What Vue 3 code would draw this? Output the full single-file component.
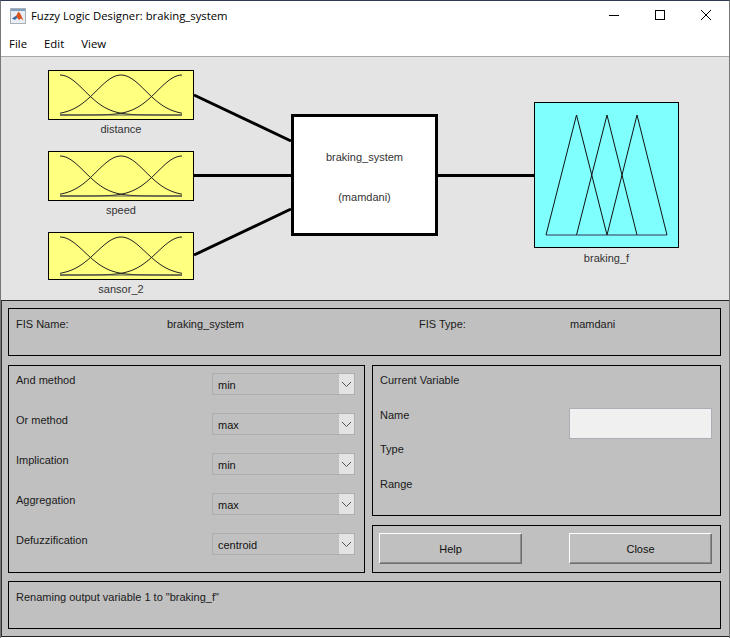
<template>
  <div class="window">
    <header class="titlebar">
      <svg class="app-icon" width="16" height="16" viewBox="0 0 16 16">
        <rect x="0.5" y="0.5" width="15" height="15" fill="#e8eef4" stroke="#a9b0b8" />
        <rect x="1" y="1" width="14" height="2" fill="#7f9fc0" />
        <path d="M2 10.5 L6 8 L8.5 3.5 L10.5 6 L13.5 12.5 L11 10.5 L9 12 L7 9.5 Z" fill="#d9541e" />
        <path d="M2 10.5 L6 8 L7.5 9.5 L5 12 Z" fill="#2f6fb0" />
      </svg>
      <span class="title">Fuzzy Logic Designer: braking_system</span>
      <div class="controls">
        <svg width="12" height="12" viewBox="0 0 12 12"><path d="M1 6.5 H11" stroke="#000" /></svg>
        <svg width="12" height="12" viewBox="0 0 12 12"><rect x="1.5" y="1.5" width="9" height="9" fill="none" stroke="#000" /></svg>
        <svg width="12" height="12" viewBox="0 0 12 12"><path d="M1 1 L11 11 M11 1 L1 11" stroke="#000" /></svg>
      </div>
    </header>

    <nav class="menubar">
      <span v-for="item in menus" :key="item">{{ item }}</span>
    </nav>

    <section class="diagram">
      <svg class="wires" width="730" height="243" viewBox="0 57 730 243">
        <path d="M194 95 L291 141 M194 175.5 H291 M194 255 L291 209 M437 175.5 H534" stroke="#000" stroke-width="3" fill="none" />
      </svg>

      <div v-for="input in inputs" :key="input.name" class="node input-node" :style="{ top: input.top + 'px' }">
        <svg :width="146" :height="input.height" :viewBox="`0 0 146 ${input.height}`">
          <rect x="0.5" y="0.5" width="145" :height="input.height - 1" fill="#ffff80" stroke="#000" />
          <path v-for="d in gaussians(input.height)" :key="d" :d="d" fill="none" stroke="#222" />
          <path :d="`M12 ${input.height - 5} H134`" stroke="#555" />
        </svg>
        <div class="node-label">{{ input.name }}</div>
      </div>

      <div class="node system-node">
        <span>braking_system</span>
        <span>(mamdani)</span>
      </div>

      <div class="node output-node">
        <svg width="145" height="146" viewBox="0 0 145 146">
          <rect x="0.5" y="0.5" width="144" height="145" fill="#80ffff" stroke="#000" />
          <path d="M12 133 L42.5 13 L73 133 M42.5 133 L73 13 L103 133 M73 133 L103 13 L133 133" fill="none" stroke="#111" />
          <path d="M12 133 H133" stroke="#335" />
        </svg>
        <div class="node-label">braking_f</div>
      </div>
    </section>

    <section class="panel">
      <div class="frame fis-frame">
        <span>FIS Name:</span>
        <span>braking_system</span>
        <span>FIS Type:</span>
        <span>mamdani</span>
      </div>

      <div class="middle">
        <div class="frame methods">
          <div v-for="m in methods" :key="m.label" class="method-row">
            <span class="method-label">{{ m.label }}</span>
            <div class="select">
              <span class="select-value">{{ m.value }}</span>
              <span class="select-arrow">
                <svg width="11" height="7" viewBox="0 0 11 7"><path d="M1 1 L5.5 5.5 L10 1" fill="none" stroke="#555" /></svg>
              </span>
            </div>
          </div>
        </div>

        <div class="right-col">
          <div class="frame current">
            <div class="current-labels">
              <span>Current Variable</span>
              <span>Name</span>
              <span>Type</span>
              <span>Range</span>
            </div>
            <div class="name-input"></div>
          </div>
          <div class="frame buttons">
            <button>Help</button>
            <button>Close</button>
          </div>
        </div>
      </div>

      <div class="frame status">Renaming output variable 1 to "braking_f"</div>
    </section>
  </div>
</template>

<script setup>
const menus = ['File', 'Edit', 'View']

const inputs = [
  { name: 'distance', top: 13, height: 50 },
  { name: 'speed', top: 94, height: 50 },
  { name: 'sansor_2', top: 175, height: 48 }
]

const methods = [
  { label: 'And method', value: 'min' },
  { label: 'Or method', value: 'max' },
  { label: 'Implication', value: 'min' },
  { label: 'Aggregation', value: 'max' },
  { label: 'Defuzzification', value: 'centroid' }
]

// three gaussian membership curves across the small box
const gaussians = (h) => {
  const top = 5
  const bottom = h - 5
  return [12, 73, 134].map((center) => {
    let d = ''
    for (let x = 12; x <= 134; x += 2) {
      const v = Math.exp(-((x - center) ** 2) / (2 * 24.5 * 24.5))
      const y = bottom - (bottom - top) * v
      d += (d ? ' L' : 'M') + x + ' ' + y.toFixed(2)
    }
    return d
  })
}
</script>

<style scoped>
.window {
  width: 730px;
  height: 638px;
  box-sizing: border-box;
  background: #fff;
  border-top: 1px solid #2b3a52;
  border-left: 1px solid #777;
  border-right: 1px solid #777;
  font-family: "Liberation Sans", Arial, sans-serif;
  font-size: 11px;
  color: #1a1a1a;
  overflow: hidden;
}

.titlebar {
  height: 30px;
  display: flex;
  align-items: center;
  padding-left: 9px;
  font-family: "Open Sans", sans-serif;
  font-size: 11.3px;
  color: #000;
}

.title {
  margin-left: 5px;
  margin-top: -1px;
}

.controls {
  margin-left: auto;
  margin-top: -2px;
  display: flex;
  gap: 34px;
  padding-right: 17px;
}

.menubar {
  height: 25px;
  display: flex;
  gap: 17px;
  padding-left: 8px;
  align-items: center;
  font-family: "Open Sans", sans-serif;
  font-size: 11.4px;
  color: #000;
  border-bottom: 1px solid #a8a8a8;
}

.diagram {
  position: relative;
  height: 243px;
  background: #e4e4e4;
}

.wires {
  position: absolute;
  left: -1px;
  top: 0;
}

.node {
  position: absolute;
}

.node svg {
  display: block;
}

.node-label {
  text-align: center;
  color: #333;
  margin-top: 3px;
}

.input-node {
  left: 47px;
  width: 146px;
}

.system-node {
  left: 290px;
  top: 57px;
  width: 147px;
  height: 122px;
  box-sizing: border-box;
  border: 3px solid #000;
  padding-top: 3px;
  background: #fff;
  color: #333;
  display: flex;
  flex-direction: column;
  align-items: center;
  justify-content: center;
  gap: 28px;
}

.output-node {
  left: 533px;
  top: 45px;
  width: 145px;
}

.output-node .node-label {
  margin-top: 4px;
}

.panel {
  height: 337px;
  box-sizing: border-box;
  background: #c0c0c0;
  border-top: 1px solid #222;
  border-bottom: 1px solid #222;
  border-left: 1px solid #333;
  padding: 7px 8px 7px 6px;
  display: flex;
  flex-direction: column;
}

.frame {
  box-sizing: border-box;
  border: 1px solid #000;
}

.fis-frame {
  height: 48px;
  display: grid;
  grid-template-columns: 151px 252px 151px 1fr;
  padding: 9px 0 0 7px;
}

.middle {
  display: flex;
  gap: 7px;
  margin: 9px 0 8px;
}

.methods {
  width: 357px;
  height: 208px;
  padding: 7px 9px 0 7px;
}

.method-row {
  height: 40px;
  display: flex;
  justify-content: space-between;
}

.method-label {
  padding-top: 1px;
}

.select {
  width: 143px;
  height: 22px;
  box-sizing: border-box;
  display: flex;
  align-items: stretch;
  border: 1px solid #adadb5;
  color: #111;
}

.select-value {
  flex: 1;
  padding: 5px 0 0 5px;
}

.select-arrow {
  width: 15px;
  background: #e3e3e3;
  display: flex;
  align-items: center;
  justify-content: center;
}

.right-col {
  flex: 1;
  display: flex;
  flex-direction: column;
  gap: 9px;
}

.current {
  height: 151px;
  display: flex;
  justify-content: space-between;
  padding: 8px 8px 0 7px;
}

.current-labels {
  display: flex;
  flex-direction: column;
  gap: 21.6px;
  line-height: 13px;
}

.name-input {
  width: 143px;
  height: 31px;
  margin-top: 34px;
  box-sizing: border-box;
  background: #f0f0f0;
  border: 1px solid #adadb5;
}

.buttons {
  height: 48px;
  display: flex;
  justify-content: space-between;
  padding: 7px 8px 0 6px;
}

.buttons button {
  width: 143px;
  height: 31px;
  box-sizing: border-box;
  padding: 0;
  background: #c0c0c0;
  border: 1px solid;
  border-color: #fff #6e6e6e #6e6e6e #fff;
  box-shadow: inset -1px -1px 0 #8c8c8c;
  font-family: inherit;
  font-size: 11px;
  color: #111;
}

.status {
  height: 48px;
  padding: 9px 0 0 7px;
}
</style>

<style>
html,
body {
  margin: 0;
  background: #fff;
}
</style>
